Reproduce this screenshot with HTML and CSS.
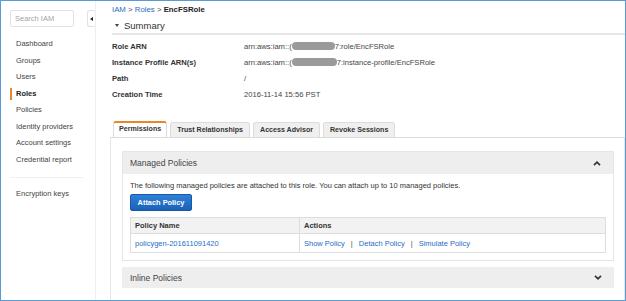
FILE: index.html
```html
<!DOCTYPE html>
<html>
<head>
    <title>IAM - EncFSRole</title>
    <link rel="stylesheet" href="styles.css">
</head>
<body>
<div class="frame">
    <aside class="sidebar">
        <div class="sideTop">
            <input type="text" class="search" placeholder="Search IAM"/>
            <div class="toggle"><span class="triLeft"></span></div>
        </div>
        <ul class="nav">
            <li><a>Dashboard</a></li>
            <li><a>Groups</a></li>
            <li><a>Users</a></li>
            <li class="active"><a>Roles</a></li>
            <li><a>Policies</a></li>
            <li><a>Identity providers</a></li>
            <li><a>Account settings</a></li>
            <li><a>Credential report</a></li>
        </ul>
        <div class="divider"></div>
        <ul class="nav">
            <li><a>Encryption keys</a></li>
        </ul>
    </aside>

    <main class="main">
        <div class="crumbs">
            <a>IAM</a> <span class="sep">&gt;</span> <a>Roles</a> <span class="sep">&gt;</span> <b>EncFSRole</b>
        </div>
        <div class="summaryHead"><span class="caretDown"></span>Summary</div>
        <div class="props">
            <div class="prop"><span class="label">Role ARN</span><span class="value">arn:aws:iam::(<span class="redact"></span>7:role/EncFSRole</span></div>
            <div class="prop"><span class="label">Instance Profile ARN(s)</span><span class="value">arn:aws:iam::(<span class="redact wide"></span>7:instance-profile/EncFSRole</span></div>
            <div class="prop"><span class="label">Path</span><span class="value">/</span></div>
            <div class="prop"><span class="label">Creation Time</span><span class="value">2016-11-14 15:56 PST</span></div>
        </div>

        <div class="tabs">
            <div class="tab active">Permissions</div>
            <div class="tab">Trust Relationships</div>
            <div class="tab">Access Advisor</div>
            <div class="tab">Revoke Sessions</div>
        </div>

        <div class="panel">
            <section class="box">
                <div class="boxHead">
                    <span>Managed Policies</span>
                    <svg class="chev" width="8" height="5" viewBox="0 0 8 5"><polyline points="1,4.2 4,1.2 7,4.2" fill="none" stroke="#333" stroke-width="1.7"/></svg>
                </div>
                <div class="boxBody">
                    <p class="desc">The following managed policies are attached to this role. You can attach up to 10 managed policies.</p>
                    <button class="btn">Attach Policy</button>
                    <table class="policies" cellspacing="0" cellpadding="0">
                        <tr><th class="colName">Policy Name</th><th>Actions</th></tr>
                        <tr>
                            <td><a>policygen-201611091420</a></td>
                            <td><a>Show Policy</a><span class="bar">|</span><a>Detach Policy</a><span class="bar">|</span><a>Simulate Policy</a></td>
                        </tr>
                    </table>
                </div>
            </section>
            <section class="box closed">
                <div class="boxHead">
                    <span>Inline Policies</span>
                    <svg class="chev" width="8" height="5" viewBox="0 0 8 5"><polyline points="1,0.8 4,3.8 7,0.8" fill="none" stroke="#333" stroke-width="1.7"/></svg>
                </div>
            </section>
        </div>
    </main>
</div>
</body>
</html>
```

FILE: styles.css
```css
* {font-family: "Liberation Sans", Arial, Helvetica, sans-serif; box-sizing: border-box;}
body {margin: 0; background: #fff;}
a {color: #1f6ec4; text-decoration: none;}

.frame {
    border: 1px solid #5b9bd5;
    display: flex;
    height: 301px;
    overflow: hidden;
    width: 626px;
}

/* sidebar */
.sidebar {border-right: 1px solid #eee; flex: 0 0 95px;}
.sideTop {display: flex; height: 17px; margin-top: 9px;}
.search {
    border: 1px solid #e2e2e2;
    border-radius: 2px;
    color: #555;
    font-size: 7.5px;
    height: 17px;
    margin-left: 9px;
    outline: none;
    padding: 0 4px;
    width: 64px;
}
.search::placeholder {color: #a5a5a5;}
.toggle {
    align-items: center;
    border: 1px solid #e2e2e2;
    border-radius: 3px 0 0 3px;
    border-right: 0;
    display: flex;
    justify-content: center;
    margin-left: auto;
    width: 8px;
}
.triLeft {border-bottom: 2.5px solid transparent; border-right: 3px solid #222; border-top: 2.5px solid transparent;}
.nav {list-style: none; margin: 9px 0 0 9px; padding: 0;}
.nav li {align-items: center; display: flex; height: 16.5px;}
.nav a {
    border-left: 2px solid transparent;
    color: #444;
    font-size: 7.5px;
    line-height: 12px;
    padding-left: 4px;
}
.nav .active a {border-left-color: #e8872b; color: #222; font-weight: bold;}
.divider {border-top: 1px solid #f0f0f0; margin: 9px 12px 0 9px;}
.divider + .nav {margin-top: 8px;}

/* main */
.main {flex: 1; padding-left: 14px;}
.crumbs {color: #555; font-size: 7.8px; height: 17px; line-height: 18px; margin-left: 2px;}
.crumbs .sep {color: #444;}
.crumbs b {color: #222;}
.summaryHead {
    align-items: center;
    border-bottom: 2px solid #e6e6e6;
    color: #333;
    display: flex;
    font-size: 9.5px;
    height: 17px;
    margin-left: 2px;
    padding-bottom: 1px;
}
.caretDown {
    border-left: 2px solid transparent;
    border-right: 2px solid transparent;
    border-top: 3px solid #444;
    margin: 0 5px 0 3px;
}
.props {margin: 3px 0 0 2px;}
.prop {align-items: center; display: flex; font-size: 7.6px; height: 16px;}
.prop .label {color: #333; font-weight: bold; width: 132px;}
.prop .value {align-items: center; color: #444; display: flex;}
.redact {background: #9a9a9a; border-radius: 4px; display: inline-block; height: 8px; width: 43px;}
.redact.wide {width: 45px;}

/* tabs */
.tabs {display: flex; gap: 3px; margin-top: 20px; padding-left: 3px;}
.tab {
    background: #efefef;
    border: 1px solid #dcdcdc;
    border-bottom: 0;
    border-radius: 3px 3px 0 0;
    color: #333;
    font-size: 7.1px;
    font-weight: bold;
    height: 15px;
    line-height: 14px;
    padding: 0 6px;
}
.tab.active {
    background: #fff;
    border-top: 2px solid #e8872b;
    height: 16px;
    line-height: 13px;
    margin-bottom: -1px;
    margin-top: -1px;
    padding: 0 5px;
    position: relative;
}
.panel {
    border-left: 1px solid #e6e6e6;
    border-right: 1px solid #e6e6e6;
    border-top: 1px solid #dcdcdc;
    height: 200px;
    padding: 13px 10px 0 11px;
}
.box {border: 1px solid #e6e6e6; padding-bottom: 7px;}
.box.closed {border: 0; margin-top: 6px; padding: 0;}
.boxHead {
    align-items: center;
    background: #eee;
    color: #444;
    display: flex;
    font-size: 8.5px;
    height: 22px;
    justify-content: space-between;
    padding: 0 12px 0 7px;
}
.box.closed .boxHead {height: 21px; padding-left: 8px;}
.chev {display: block;}
.boxBody {padding: 0 7px;}
.desc {color: #333; font-size: 7.5px; line-height: 12px; margin: 6px 0 2px;}
.btn {
    background: linear-gradient(#2f80d8, #1a62b6);
    border: 1px solid #1859a5;
    border-radius: 2px;
    color: #fff;
    display: block;
    font-size: 7.4px;
    font-weight: bold;
    height: 17px;
    padding: 0;
    width: 62px;
}
.policies {border: 1px solid #ddd; border-collapse: collapse; font-size: 7.5px; margin-top: 6px; width: 476px;}
.policies th {
    background: #f2f2f2;
    border: 1px solid #ddd;
    color: #333;
    height: 16px;
    padding-left: 4px;
    text-align: left;
}
.policies .colName {width: 169px;}
.policies td {border: 1px solid #ddd; height: 19px; padding-left: 4px;}
.policies .bar {color: #555; padding: 0 6px;}
```
